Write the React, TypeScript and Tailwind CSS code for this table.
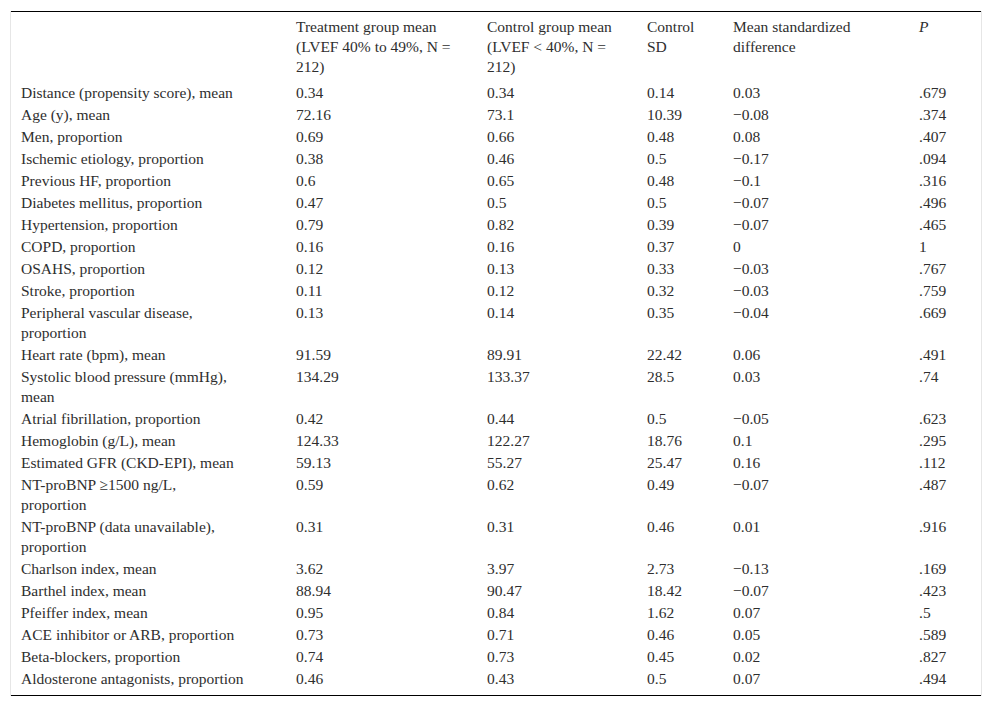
import React from "react";

const rows: string[][] = [
  ["Distance (propensity score), mean", "0.34", "0.34", "0.14", "0.03", ".679"],
  ["Age (y), mean", "72.16", "73.1", "10.39", "−0.08", ".374"],
  ["Men, proportion", "0.69", "0.66", "0.48", "0.08", ".407"],
  ["Ischemic etiology, proportion", "0.38", "0.46", "0.5", "−0.17", ".094"],
  ["Previous HF, proportion", "0.6", "0.65", "0.48", "−0.1", ".316"],
  ["Diabetes mellitus, proportion", "0.47", "0.5", "0.5", "−0.07", ".496"],
  ["Hypertension, proportion", "0.79", "0.82", "0.39", "−0.07", ".465"],
  ["COPD, proportion", "0.16", "0.16", "0.37", "0", "1"],
  ["OSAHS, proportion", "0.12", "0.13", "0.33", "−0.03", ".767"],
  ["Stroke, proportion", "0.11", "0.12", "0.32", "−0.03", ".759"],
  ["Peripheral vascular disease,\nproportion", "0.13", "0.14", "0.35", "−0.04", ".669"],
  ["Heart rate (bpm), mean", "91.59", "89.91", "22.42", "0.06", ".491"],
  ["Systolic blood pressure (mmHg),\nmean", "134.29", "133.37", "28.5", "0.03", ".74"],
  ["Atrial fibrillation, proportion", "0.42", "0.44", "0.5", "−0.05", ".623"],
  ["Hemoglobin (g/L), mean", "124.33", "122.27", "18.76", "0.1", ".295"],
  ["Estimated GFR (CKD-EPI), mean", "59.13", "55.27", "25.47", "0.16", ".112"],
  ["NT-proBNP ≥1500 ng/L,\nproportion", "0.59", "0.62", "0.49", "−0.07", ".487"],
  ["NT-proBNP (data unavailable),\nproportion", "0.31", "0.31", "0.46", "0.01", ".916"],
  ["Charlson index, mean", "3.62", "3.97", "2.73", "−0.13", ".169"],
  ["Barthel index, mean", "88.94", "90.47", "18.42", "−0.07", ".423"],
  ["Pfeiffer index, mean", "0.95", "0.84", "1.62", "0.07", ".5"],
  ["ACE inhibitor or ARB, proportion", "0.73", "0.71", "0.46", "0.05", ".589"],
  ["Beta-blockers, proportion", "0.74", "0.73", "0.45", "0.02", ".827"],
  ["Aldosterone antagonists, proportion", "0.46", "0.43", "0.5", "0.07", ".494"],
];

const th = "font-normal pl-[10px] pr-[10px] pt-[5px] pb-[5px]";

export default function App() {
  return (
    <div className="bg-white min-h-screen px-[10px] pt-[11px] font-['Liberation_Serif','Times_New_Roman',serif] text-[15.5px] leading-[20px] text-[#2e2e2e]">
      <div className="border-x border-[#e6e6e6]">
        <table className="w-[970px] table-fixed border-collapse border-t border-b border-black">
          <colgroup>
            <col className="w-[275px]" />
            <col className="w-[191px]" />
            <col className="w-[160px]" />
            <col className="w-[86px]" />
            <col className="w-[186px]" />
            <col className="w-[72px]" />
          </colgroup>
          <thead>
            <tr className="align-top text-left">
              <th className={th}></th>
              <th className={th}>Treatment group mean (LVEF 40% to 49%, N = 212)</th>
              <th className={th}>Control group mean (LVEF &lt; 40%, N = 212)</th>
              <th className={th}>Control SD</th>
              <th className={th}>Mean standardized difference</th>
              <th className={th + " italic"}>P</th>
            </tr>
          </thead>
          <tbody>
            {rows.map((r, ri) => (
              <tr key={r[0]} className="align-top">
                {r.map((c, i) => (
                  <td
                    key={i}
                    className={
                      "pl-[10px] pr-[10px] pt-px whitespace-pre-line " +
                      (ri === rows.length - 1 ? "pb-[6px]" : "pb-px")
                    }
                  >
                    {c}
                  </td>
                ))}
              </tr>
            ))}
          </tbody>
        </table>
      </div>
    </div>
  );
}
